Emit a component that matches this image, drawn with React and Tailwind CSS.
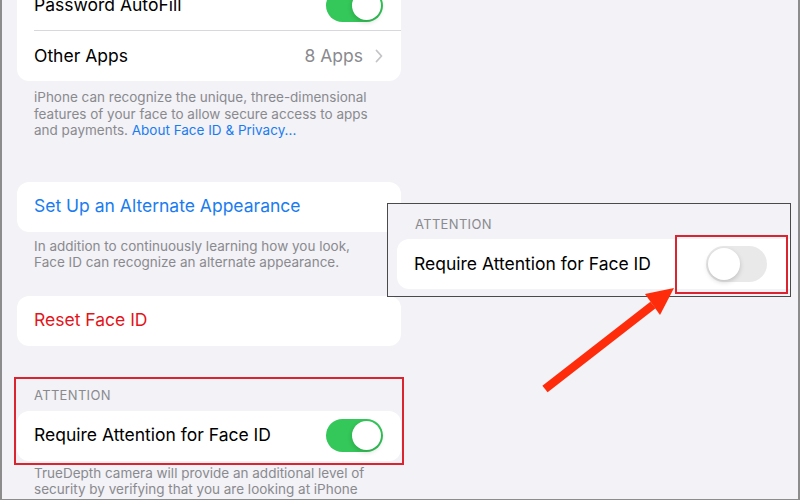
const font = { fontFamily: "Inter, 'Noto Sans', sans-serif" };

function Toggle({ on, big }) {
  const size = big ? "w-[61px] h-[36px]" : "w-[57px] h-[33px]";
  const knob = big ? "w-[32px] h-[32px]" : "w-[29px] h-[29px]";
  return (
    <div
      className={`${size} rounded-full p-[2px] flex ${
        on ? "bg-[#34c759] justify-end" : "bg-[#e9e9ea] justify-start"
      }`}
    >
      <div className={`${knob} rounded-full bg-white shadow-[0_2px_5px_rgba(0,0,0,0.18)]`} />
    </div>
  );
}

function Row({ children, className = "" }) {
  return (
    <div className={`h-[50px] flex items-center justify-between pl-[17px] pr-[18px] ${className}`}>
      {children}
    </div>
  );
}

function Footer({ children, className = "" }) {
  return (
    <p className={`px-[17px] text-[13.5px] leading-[16.5px] text-[#8a8a8e] ${className}`}>{children}</p>
  );
}

export default function App() {
  return (
    <div
      style={font}
      className="relative w-[800px] h-[500px] overflow-hidden bg-[#f2f2f7] border-2 border-[#8c8c8c] border-t-0 border-b border-r-2"
    >
      <div className="w-[384px] ml-[15px] text-[17.5px] text-black">
        <div className="-mt-[20px] bg-white rounded-[12px] overflow-hidden">
          <Row>
            <span>Password AutoFill</span>
            <Toggle on />
          </Row>
          <div className="ml-[17px] h-px bg-[#d8d8dc]" />
          <Row className="h-[49px]">
            <span>Other Apps</span>
            <span className="flex items-center gap-[12px] text-[#8a8a8e]">
              8 Apps
              <svg width="8" height="14" viewBox="0 0 8 14" fill="none">
                <path d="M1.5 1.5 L6.5 7 L1.5 12.5" stroke="#c4c4c7" strokeWidth="1.8" strokeLinecap="round" strokeLinejoin="round" />
              </svg>
            </span>
          </Row>
        </div>
        <Footer className="mt-[8px]">
          iPhone can recognize the unique, three-dimensional features of your face to allow secure access to apps and
          payments. <span className="text-[#1a7cf0]">About Face ID &amp; Privacy...</span>
        </Footer>

        <div className="mt-[43px] bg-white rounded-[12px]">
          <Row className="h-[49px] text-[#1a7cf0]">Set Up an Alternate Appearance</Row>
        </div>
        <Footer className="mt-[6px]">
          In addition to continuously learning how you look, Face ID can recognize an alternate appearance.
        </Footer>

        <div className="mt-[25px] bg-white rounded-[12px]">
          <Row className="h-[49px] text-[#e3151b]">Reset Face ID</Row>
        </div>

        <div className="mt-[31px] -mx-[3px] border-2 border-[#dc2430] px-px pt-[8px] pb-[2px]">
          <div className="pl-[17px] text-[13px] leading-[16px] text-[#8a8a8e] tracking-wide">ATTENTION</div>
          <div className="mt-[8px] bg-white rounded-[12px]">
            <Row>
              <span>Require Attention for Face ID</span>
              <Toggle on />
            </Row>
          </div>
        </div>
        <Footer className="mt-0">
          TrueDepth camera will provide an additional level of security by verifying that you are looking at iPhone
          before unlocking.
        </Footer>
      </div>

      <div className="absolute left-[385px] top-[203px] w-[404px] h-[94px] border border-[#4a4a4a] bg-[#f2f2f7] pl-[9px] pt-[12px]">
        <div className="pl-[18px] text-[13px] leading-[16px] text-[#8a8a8e] tracking-wide">ATTENTION</div>
        <div className="mt-[7px] bg-white rounded-l-[12px] h-[50px] flex items-center justify-between pl-[17px] text-[17.5px] text-black">
          <span>Require Attention for Face ID</span>
          <div className="w-[113px] h-[59px] border-2 border-[#dc2430] flex items-center justify-start pl-[29px] mr-[2px]">
            <Toggle big />
          </div>
        </div>
      </div>

      <svg className="absolute left-0 top-0" width="800" height="500" viewBox="0 0 800 500">
        <line x1="543" y1="389" x2="651" y2="305" stroke="#fe2c0a" strokeWidth="8.5" strokeLinecap="butt" />
        <polygon points="672,288 643,294 658,315" fill="#fe2c0a" />
      </svg>
    </div>
  );
}
